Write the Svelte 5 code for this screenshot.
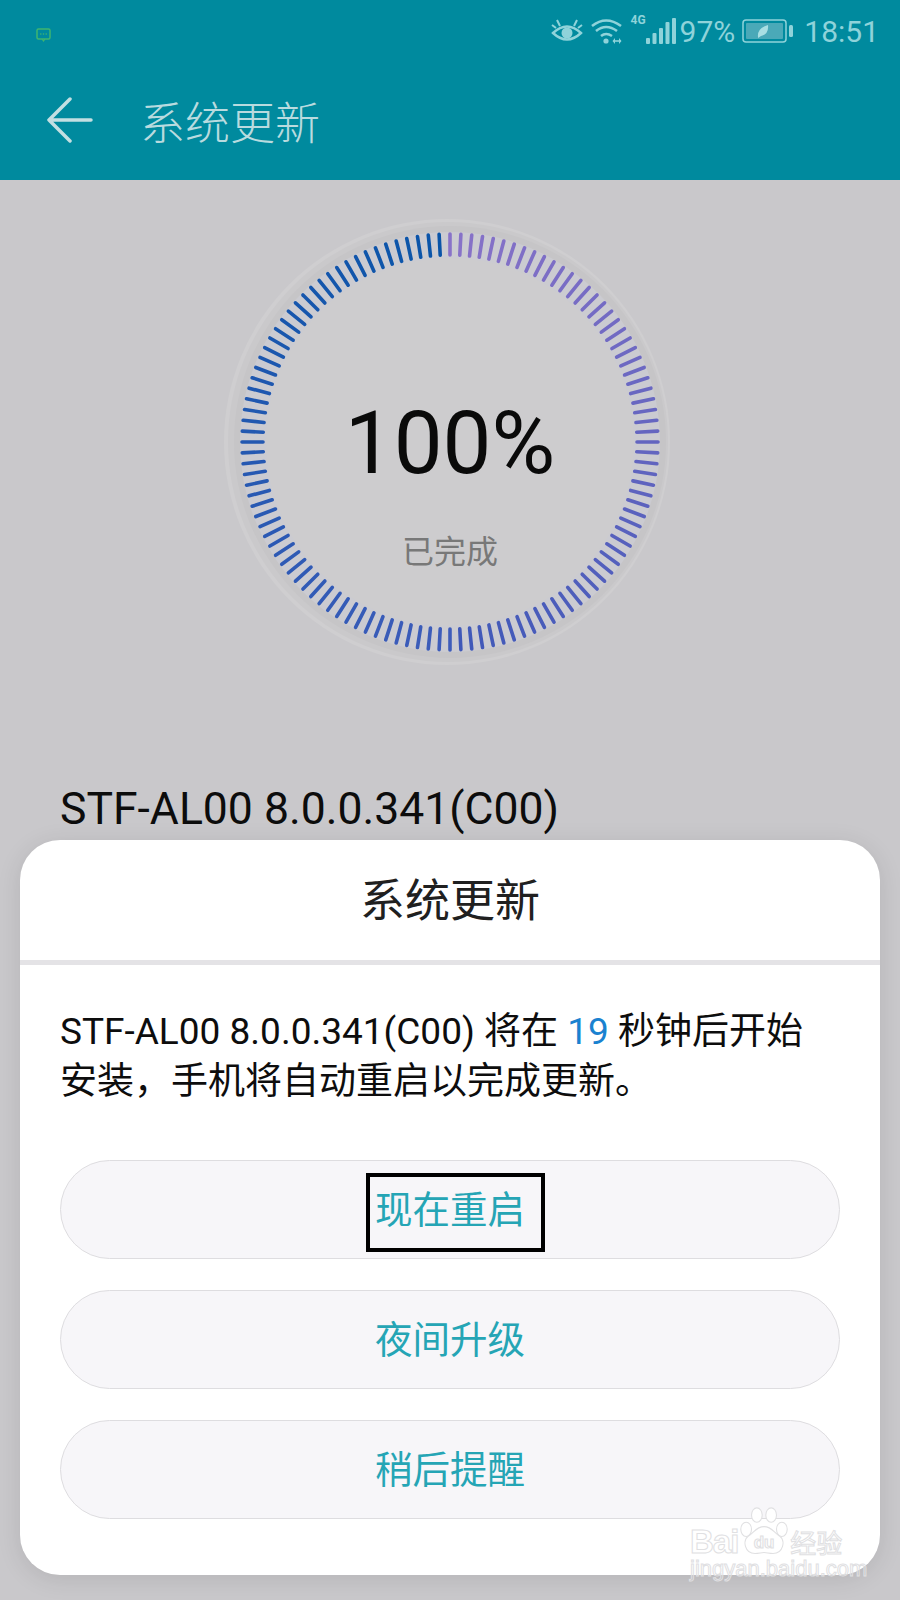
<script lang="ts">
  const cx = 230;
  const cy = 230;
  const mix = (a: number[], b: number[], t: number) =>
    `rgb(${a.map((v, i) => Math.round(v + (b[i] - v) * t)).join(',')})`;

  // 120 ticks, clockwise from 12 o'clock
  const ticks = Array.from({ length: 120 }, (_, i) => {
    const ang = (i * 3 * Math.PI) / 180;
    const s = Math.sin(ang);
    const c = Math.cos(ang);
    const color = i < 60
      ? mix([136, 114, 200], [62, 88, 184], i / 60)
      : mix([62, 92, 186], [8, 84, 168], (i - 60) / 60);
    return {
      x1: cx + s * 187, y1: cy - c * 187,
      x2: cx + s * 208, y2: cy - c * 208,
      color
    };
  });

  const buttons = ['现在重启', '夜间升级', '稍后提醒'];
</script>

<div class="screen">
  <header class="top">
    <div class="status">
      <svg class="msg" width="18" height="18" viewBox="0 0 18 18">
        <rect x="2" y="2" width="13" height="10" rx="1.5" fill="none" stroke="#3fb56f" stroke-width="1.5" />
        <path d="M7 12l1.5 2 1.5-2" fill="none" stroke="#3fb56f" stroke-width="1.2" />
        <circle cx="5.8" cy="7" r=".8" fill="#3fb56f" /><circle cx="8.5" cy="7" r=".8" fill="#3fb56f" /><circle cx="11.2" cy="7" r=".8" fill="#3fb56f" />
      </svg>
      <div class="status-right">
        <svg width="32" height="28" viewBox="0 0 32 28" fill="none" stroke="#8fd3da" stroke-width="2.4">
          <path d="M2 16q14-13 28 0q-14 13-28 0z" />
          <circle cx="16" cy="16" r="5.5" fill="#8fd3da" stroke="none" />
          <path d="M6 3l3 6M26 3l-3 6M1 8l4 3M31 8l-4 3" stroke-width="2" />
        </svg>
        <svg class="wifi" width="34" height="28" viewBox="0 0 34 28" fill="none" stroke="#8fd3da" stroke-width="2.6">
          <path d="M2 9q14-11 29 0M6 14q10-8 21 0M11 19q5-4 11 0" />
          <circle cx="16" cy="24" r="2.6" fill="#8fd3da" stroke="none" />
          <path d="M24 24h7" stroke-width="1.6" />
          <path d="M25 21l-2.5 3 2.5 3zM29 21l2.5 3-2.5 3z" fill="#8fd3da" stroke="none" />
        </svg>
        <div class="net">
          <span class="g4">4G</span>
          <svg width="30" height="28" viewBox="0 0 30 28" fill="#8fd3da">
            <rect x="0" y="21" width="4" height="6" rx="1" />
            <rect x="6.500" y="16" width="4" height="11" rx="1" />
            <rect x="13" y="11" width="4" height="16" rx="1" />
            <rect x="19.500" y="5" width="4" height="22" rx="1" />
            <rect x="26" y="1" width="4" height="26" rx="1" />
          </svg>
        </div>
        <span class="pct">97%</span>
        <svg class="batt" width="52" height="26" viewBox="0 0 52 26">
          <rect x="1" y="2" width="43" height="22" rx="3" fill="none" stroke="#8fd3da" stroke-width="1.5" />
          <rect x="4" y="5" width="37" height="16" rx="1" fill="#4aa9b8" />
          <path d="M16 19q-1-9 10-12q1 9-7 11l-3 2z" fill="#a8dfe3" />
          <rect x="47" y="7" width="4" height="12" rx="1.500" fill="#8fd3da" />
        </svg>
        <span class="time">18:51</span>
      </div>
    </div>
    <div class="toolbar">
      <svg width="46" height="46" viewBox="0 0 46 46" fill="none" stroke="#c3dfe2" stroke-width="3.500" stroke-linecap="round" stroke-linejoin="round">
        <path d="M23 2L2 23l21 21M2 23h42" />
      </svg>
      <span class="bar-title">系统更新</span>
    </div>
  </header>

  <main class="content">
    <div class="dial">
      <svg width="460" height="460" viewBox="0 0 460 460">
        <circle cx={cx - 3} {cy} r="223" fill="#cfced0" />
        <circle cx={cx - 2} {cy} r="220" fill="#cac9cb" />
        <circle {cx} {cy} r="216" fill="#c6c5c7" />
        <circle {cx} {cy} r="210" fill="#cbcbd1" />
        <circle {cx} {cy} r="184" fill="#cdccce" />
        {#each ticks as t}
          <line x1={t.x1} y1={t.y1} x2={t.x2} y2={t.y2} stroke={t.color} stroke-width="3.600" stroke-linecap="round" />
        {/each}
      </svg>
      <div class="dial-text">
        <div class="num">100%</div>
        <div class="done">已完成</div>
      </div>
    </div>
    <div class="version">STF-AL00 8.0.0.341(C00)</div>
  </main>

  <div class="dialog">
    <div class="dlg-title">系统更新</div>
    <p class="dlg-msg">STF-AL00 8.0.0.341(C00) 将在 <span class="count">19</span> 秒钟后开始<br />安装，手机将自动重启以完成更新。</p>
    <div class="actions">
      {#each buttons as b, i}
        <div class="btn"><span class:marked={i === 0}>{b}</span></div>
      {/each}
    </div>
    <div class="mark">
      <div class="mark-row">
        <span class="bai">Bai</span>
        <svg width="52" height="50" viewBox="0 0 58 56" fill="#fff" stroke="#e0e0e2" stroke-width="1.200">
          <ellipse cx="9" cy="25" rx="6" ry="8" />
          <ellipse cx="21" cy="9" rx="6" ry="8" />
          <ellipse cx="37" cy="9" rx="6" ry="8" />
          <ellipse cx="49" cy="25" rx="6" ry="8" />
          <path d="M29 22c-9 0-11 7-18 11c-6 4-4 19 8 19c4 0 7-1 10-1s6 1 10 1c12 0 14-15 8-19c-7-4-9-11-18-11z" />
          <text x="29" y="46" text-anchor="middle" font-size="19" font-family="Liberation Sans, sans-serif" font-weight="700" fill="#fff">du</text>
        </svg>
        <span class="jy">经验</span>
      </div>
      <div class="url">jingyan.baidu.com</div>
    </div>
  </div>
</div>

<style>
  :global(body) { margin: 0; background: #c9c8cb; }

  .screen {
    position: relative;
    width: 900px;
    height: 1600px;
    overflow: hidden;
    background: #c9c8cb;
    font-family: Roboto, "Noto Sans CJK SC", sans-serif;
  }

  .top { height: 180px; background: #008a9e; }

  .status {
    height: 62px;
    display: flex;
    align-items: center;
    justify-content: space-between;
    padding: 0 21px 0 35px;
  }

  .msg { margin-top: 10px; }

  .status-right {
    display: flex;
    align-items: center;
    gap: 7px;
    color: #8fd3da;
    font-size: 30px;
  }

  .net { display: flex; align-items: flex-end; position: relative; padding-left: 15px; }
  .g4 { position: absolute; left: 0; top: -4px; font-size: 12px; font-weight: 700; }
  .pct { margin-left: -3px; }
  .time { margin-left: 3px; }

  .toolbar {
    height: 118px;
    display: flex;
    align-items: center;
    padding-left: 47px;
    gap: 47px;
    box-sizing: border-box;
    padding-bottom: 2px;
  }

  .bar-title { color: #b9dbdf; font-size: 45px; font-weight: 300; }

  .content { display: flex; flex-direction: column; }

  .dial {
    display: grid;
    justify-items: center;
    margin-top: 32px;
  }
  .dial svg, .dial-text { grid-area: 1 / 1; }

  .dial-text {
    display: flex;
    flex-direction: column;
    align-items: center;
    padding-top: 178px;
  }

  .num { font-size: 87px; line-height: 106px; color: #0a0a0a; }
  .done { font-size: 32px; line-height: 44px; color: #787878; margin-top: 34px; }

  .version {
    margin-top: 112px;
    padding-left: 60px;
    font-size: 44.5px;
    line-height: 50px;
    color: #0c0c0c;
  }

  .dialog {
    position: absolute;
    left: 20px;
    top: 840px;
    width: 860px;
    height: 735px;
    background: #fff;
    border-radius: 40px;
    box-shadow: 0 4px 24px rgba(0, 0, 0, 0.1);
  }

  .dlg-title {
    height: 120px;
    line-height: 124px;
    text-align: center;
    font-size: 45px;
    color: #202020;
    border-bottom: 5px solid #e4e3e6;
  }

  .dlg-msg {
    margin: 42px 40px 0;
    font-size: 37px;
    line-height: 50px;
    color: #0d0d0d;
  }

  .count { color: #1a82d0; }

  .actions {
    display: flex;
    flex-direction: column;
    gap: 31px;
    margin: 53px 40px 0;
  }

  .btn {
    height: 99px;
    box-sizing: border-box;
    border: 1.5px solid #dedde0;
    border-radius: 50px;
    background: #f7f6f9;
    display: flex;
    align-items: center;
    justify-content: center;
    font-size: 37.5px;
    line-height: 44px;
    color: #25a5b5;
  }

  .marked { position: relative; }

  /* annotation box drawn over the first button */
  .marked::after {
    content: "";
    position: absolute;
    left: -9px;
    right: -20px;
    top: -15px;
    bottom: -20px;
    border: 4px solid #000;
  }

  .mark {
    position: absolute;
    left: 670px;
    top: 663px;
    width: 165px;
    color: transparent;
  }

  .mark-row { display: flex; align-items: flex-end; height: 54px; }

  .bai, .jy, .url { -webkit-text-stroke: 1px #e0e0e2; font-family: "Liberation Sans", sans-serif; }
  .bai { font-size: 33px; line-height: 30px; font-weight: 700; letter-spacing: -1px; }
  .jy { font-size: 26px; line-height: 30px; font-family: "Noto Sans CJK SC", sans-serif; white-space: nowrap; }
  .url { font-size: 22px; line-height: 24px; white-space: nowrap; }
</style>
